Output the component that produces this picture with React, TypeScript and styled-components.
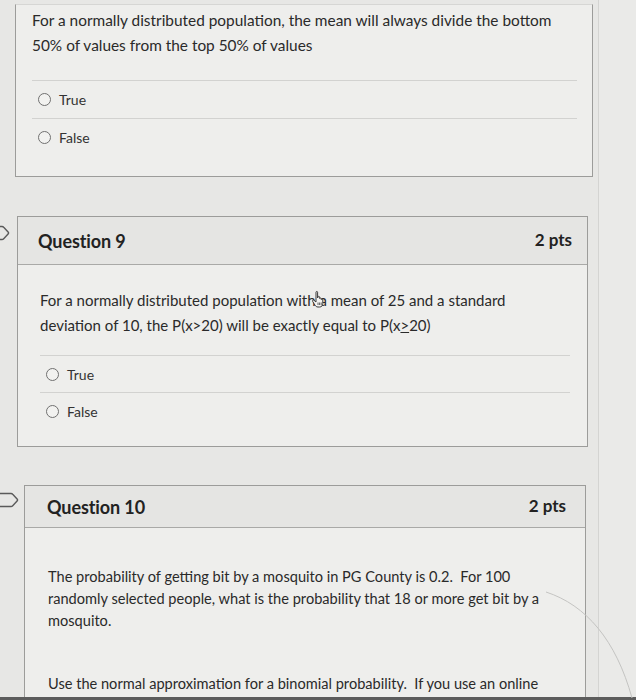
import React from "react";
import styled, { createGlobalStyle } from "styled-components";

const Global = createGlobalStyle`
  html, body { margin: 0; padding: 0; }
  body {
    background: #e7e7e5;
    font-family: Lato, "Open Sans", "Liberation Sans", sans-serif;
    color: #2b2b2b;
  }
`;

const Page = styled.div`
  position: relative;
  width: 636px;
  height: 700px;
  display: flex;
  flex-direction: column;
  overflow: hidden;
  background: #e7e7e5;
`;

const Viewport = styled.div`
  flex: 1;
  display: flex;
  overflow: hidden;
`;

const Main = styled.div`
  width: 598px;
  display: flex;
  flex-direction: column;
`;

const SideStrip = styled.div`
  flex: 1;
  background: #eaeae8;
  border-left: 1px solid #d4d4d2;
`;

const BottomBar = styled.div`
  height: 3px;
  background: #5c5c5c;
`;

const Row = styled.div<{ $top: number }>`
  display: flex;
  align-items: flex-start;
  margin-top: ${(p) => p.$top}px;
`;

const Gutter = styled.div<{ $w: number; $flagTop: number }>`
  width: ${(p) => p.$w}px;
  flex-shrink: 0;
  display: flex;
  justify-content: flex-end;
  padding-top: ${(p) => p.$flagTop}px;
  overflow: hidden;
`;

const FlagSvg = styled.svg<{ $shift: number }>`
  flex-shrink: 0;
  margin-right: ${(p) => p.$shift}px;
`;

const Card = styled.div<{ $w: number; $noTop?: boolean }>`
  width: ${(p) => p.$w}px;
  box-sizing: border-box;
  background: #eeeeec;
  border: 1px solid #9c9c9a;
  border-top-color: ${(p) => (p.$noTop ? "#d6d6d4" : "#9c9c9a")};
`;

const Header = styled.div<{ $h: number; $pl: number; $pr: number }>`
  height: ${(p) => p.$h}px;
  box-sizing: border-box;
  display: flex;
  align-items: center;
  justify-content: space-between;
  padding: 0 ${(p) => p.$pr}px 0 ${(p) => p.$pl}px;
  background: #e5e5e3;
  border-bottom: 1px solid #a9a9a7;
`;

const Title = styled.div`
  font-size: 18px;
  font-weight: 700;
  color: #222;
  letter-spacing: -0.1px;
`;

const Points = styled.div`
  font-size: 17px;
  font-weight: 700;
  color: #222;
  margin-top: -3px;
`;

const Body = styled.div<{ $pt: number; $pl: number; $pr: number; $pb: number }>`
  padding: ${(p) => p.$pt}px ${(p) => p.$pr}px ${(p) => p.$pb}px ${(p) => p.$pl}px;
`;

const Text = styled.p<{ $lh: number; $fs: number; $mb?: number }>`
  margin: 0 0 ${(p) => p.$mb ?? 0}px 0;
  font-size: ${(p) => p.$fs}px;
  line-height: ${(p) => p.$lh}px;
  color: #2a2a2a;
  white-space: nowrap;
`;

const Underlined = styled.span`
  text-decoration: underline;
  text-decoration-thickness: 1px;
`;

const Answers = styled.div`
  display: flex;
  flex-direction: column;
`;

const Answer = styled.div<{ $h: number }>`
  height: ${(p) => p.$h}px;
  display: flex;
  align-items: center;
  gap: 8px;
  padding-left: 6px;
  border-top: 1px solid #d2d2d0;
`;

const Radio = styled.span`
  width: 11px;
  height: 11px;
  border-radius: 50%;
  border: 1px solid #707070;
  background: #f2f2f0;
  flex-shrink: 0;
`;

const Label = styled.span`
  font-size: 14px;
  color: #333;
`;

const Cursor = styled.span`
  position: relative;
  display: inline-block;
  width: 0;
`;

const CursorSvg = styled.svg`
  position: absolute;
  left: -8px;
  top: -16px;
`;

const Glare = styled.svg`
  position: absolute;
  right: 0;
  bottom: 0;
  pointer-events: none;
`;

const Flag = ({ shift }: { shift: number }) => (
  <FlagSvg $shift={shift} width="22" height="16" viewBox="0 0 22 16">
    <path
      d="M1.5 1.5 H14 Q15 1.5 15.7 2.3 L20.3 7.2 Q20.8 8 20.3 8.8 L15.7 13.7 Q15 14.5 14 14.5 H1.5 Z"
      fill="none"
      stroke="#5a5a5a"
      strokeWidth="1.4"
      strokeLinejoin="round"
    />
  </FlagSvg>
);

const HandCursor = () => (
  <Cursor>
    <CursorSvg width="16" height="20" viewBox="0 0 16 20">
      <path
        d="M5 2.2 C5 1.2 6.6 1.2 6.6 2.2 V8 L7 6.8 C7.3 6 8.6 6.2 8.6 7.2 V8.5 C8.9 7.7 10.2 7.9 10.2 8.9 V9.6 C10.5 8.9 11.8 9.1 11.8 10 V13.5 C11.8 15.5 10.6 17 8.6 17 H7 C5.6 17 4.7 16.3 4 15.2 L1.6 11.3 C1.1 10.4 2.2 9.6 3 10.3 L5 12 Z"
        fill="#f4f4f2"
        stroke="#3a3a3a"
        strokeWidth="1"
        strokeLinejoin="round"
      />
      <path d="M7 12.5 V15 M8.6 12.5 V15 M10.2 12.5 V15" stroke="#3a3a3a" strokeWidth="0.8" />
    </CursorSvg>
  </Cursor>
);

export default function App() {
  return (
    <>
      <Global />
      <Page>
        <Viewport>
          <Main>
            <Row $top={4}>
              <Gutter $w={15} $flagTop={0} />
              <Card $w={578} $noTop>
                <Body $pt={3} $pl={16} $pr={15} $pb={20}>
                  <Text $fs={15.4} $lh={25} $mb={22}>
                    For a normally distributed population, the mean will always divide the bottom
                    <br />
                    50% of values from the top 50% of values
                  </Text>
                  <Answers>
                    <Answer $h={37}>
                      <Radio />
                      <Label>True</Label>
                    </Answer>
                    <Answer $h={37}>
                      <Radio />
                      <Label>False</Label>
                    </Answer>
                  </Answers>
                </Body>
              </Card>
            </Row>

            <Row $top={39}>
              <Gutter $w={17} $flagTop={9}>
                <Flag shift={7} />
              </Gutter>
              <Card $w={571}>
                <Header $h={48} $pl={20} $pr={15}>
                  <Title>Question 9</Title>
                  <Points>2 pts</Points>
                </Header>
                <Body $pt={23} $pl={22} $pr={17} $pb={17}>
                  <Text $fs={15} $lh={25} $mb={17}>
                    For a normally distributed population with <HandCursor />a mean of 25 and a standard
                    <br />
                    deviation of 10, the P(x&gt;20) will be exactly equal to P(x<Underlined>&gt;</Underlined>20)
                  </Text>
                  <Answers>
                    <Answer $h={36}>
                      <Radio />
                      <Label>True</Label>
                    </Answer>
                    <Answer $h={36}>
                      <Radio />
                      <Label>False</Label>
                    </Answer>
                  </Answers>
                </Body>
              </Card>
            </Row>

            <Row $top={38}>
              <Gutter $w={24} $flagTop={7}>
                <Flag shift={5} />
              </Gutter>
              <Card $w={562}>
                <Header $h={42} $pl={22} $pr={19}>
                  <Title>Question 10</Title>
                  <Points>2 pts</Points>
                </Header>
                <Body $pt={38} $pl={23} $pr={20} $pb={20}>
                  <Text $fs={14.6} $lh={22} $mb={41}>
                    The probability of getting bit by a mosquito in PG County is 0.2.&nbsp; For 100
                    <br />
                    randomly selected people, what is the probability that 18 or more get bit by a
                    <br />
                    mosquito.
                  </Text>
                  <Text $fs={14.6} $lh={22}>
                    Use the normal approximation for a binomial probability.&nbsp; If you use an online
                  </Text>
                </Body>
              </Card>
            </Row>
          </Main>
          <SideStrip />
        </Viewport>
        <BottomBar />
        <Glare width="90" height="120" viewBox="0 0 90 120">
          <path d="M0 12 C40 25 70 60 86 118" fill="none" stroke="#c4c4c2" strokeWidth="1" />
        </Glare>
      </Page>
    </>
  );
}
